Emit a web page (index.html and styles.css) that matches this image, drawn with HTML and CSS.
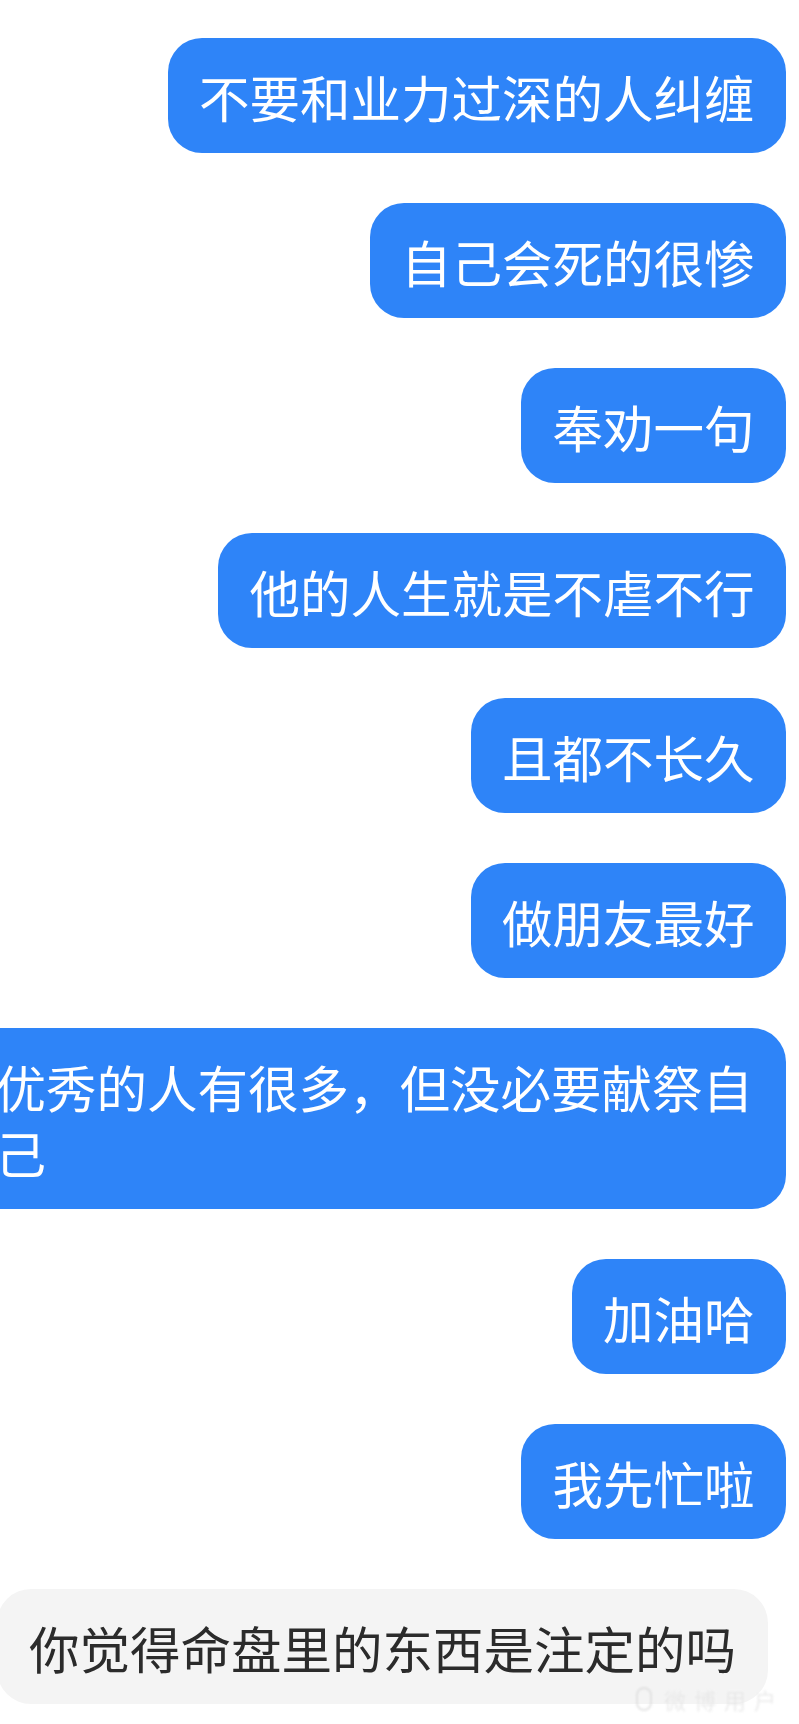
FILE: index.html
```html
<!DOCTYPE html>
<html lang="zh-CN">
<head>
<meta charset="utf-8">
<title>聊天记录</title>
<link rel="stylesheet" href="styles.css">
</head>
<body>
<div class="chat">
  <div class="bubble me">不要和业力过深的人纠缠</div>
  <div class="bubble me">自己会死的很惨</div>
  <div class="bubble me">奉劝一句</div>
  <div class="bubble me">他的人生就是不虐不行</div>
  <div class="bubble me">且都不长久</div>
  <div class="bubble me">做朋友最好</div>
  <div class="bubble me wide">优秀的人有很多，但没必要献祭自己</div>
  <div class="bubble me">加油哈</div>
  <div class="bubble me">我先忙啦</div>
  <div class="bubble other">你觉得命盘里的东西是注定的吗</div>
</div>
<div class="watermark"><span class="wm-logo"></span><span class="wm-text">微博用户</span></div>
</body>
</html>
```
FILE: styles.css
```css
html, body {
  margin: 0;
  padding: 0;
  background: #ffffff;
  overflow-x: hidden;
}
body {
  position: relative;
  min-height: 1724px;
  font-family: "Noto Sans CJK SC", "Noto Sans", sans-serif;
}
.chat {
  display: flex;
  flex-direction: column;
  align-items: flex-end;
  gap: 50px;
  padding: 38px 13px 0 0;
}
.bubble {
  font-size: 50.5px;
  line-height: 66px;
  padding: 24.5px 31.5px;
  border-radius: 34px;
  box-sizing: border-box;
}
.me {
  background: #2e84f8;
  color: #ffffff;
}
.wide {
  align-self: stretch;
  margin-left: -36px;
}
.other {
  align-self: flex-start;
  margin-left: -3px;
  background: #f4f4f4;
  color: #2b2b2b;
  padding-left: 32px;
  padding-right: 32px;
}
.watermark {
  position: absolute;
  left: 636px;
  top: 1686px;
  display: flex;
  align-items: center;
  gap: 12px;
  white-space: nowrap;
  opacity: 0.6;
  filter: blur(1.2px);
}
.wm-logo {
  width: 16px;
  height: 24px;
  border: 2px solid #d4d4d4;
  border-radius: 8px;
  box-sizing: border-box;
}
.wm-text {
  font-size: 22px;
  line-height: 26px;
  letter-spacing: 8px;
  color: #dedede;
  text-shadow: 0 0 2px #ffffff;
}
```
